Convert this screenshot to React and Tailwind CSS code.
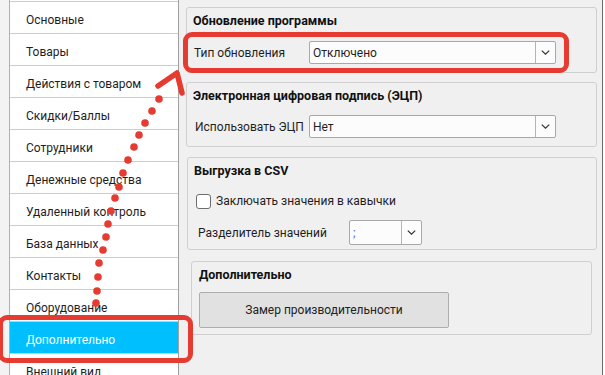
import React from "react";

const menuItems = [
  "Основные",
  "Товары",
  "Действия с товаром",
  "Скидки/Баллы",
  "Сотрудники",
  "Денежные средства",
  "Удаленный контроль",
  "База данных",
  "Контакты",
  "Оборудование",
  "Дополнительно",
  "Внешний вид",
];

const dots = [
  [96, 303], [97, 291], [98, 277], [99, 263], [103, 250], [106, 237],
  [108, 224], [111, 211], [115, 198], [119, 187], [123, 173], [128, 160],
  [134, 147], [139, 135], [145, 123], [152, 111], [159, 99],
];

const Chevron = () => (
  <svg width="9" height="5" viewBox="0 0 9 5" fill="none">
    <path d="M0.8 0.6l3.7 3.6 3.7-3.6" stroke="#333" strokeWidth="1.2" />
  </svg>
);

const Combo = ({ value, width, height, valueClass }) => (
  <div
    className="flex bg-[#fcfcfc] border border-[#a8a8a8] rounded-[2px]"
    style={{ width, height }}
  >
    <div className={`flex-1 flex items-center pl-[3px] ${valueClass || ""}`}>{value}</div>
    <div className="w-[20px] border-l border-[#b4b4b4] flex items-center justify-center">
      <Chevron />
    </div>
  </div>
);

const GroupBox = ({ title, className, children }) => (
  <div className={`border border-[#cfcfcf] rounded-[3px] ${className}`}>
    <div className="font-bold text-[12.5px] text-[#111] h-[26px] flex items-center">{title}</div>
    {children}
  </div>
);

export default function App() {
  return (
    <div
      className="relative w-[605px] h-[375px] overflow-hidden flex bg-[#f0f0f0] text-[12px] text-[#1e1e1e] whitespace-nowrap"
      style={{ fontFamily: "Roboto, 'Noto Sans', sans-serif" }}
    >
      <div className="w-[10px] border-r border-[#b0b0b0] bg-[#f3f3f3]" />
      <div className="w-[169px] bg-white border-r border-[#a0a0a0] pt-[1px] flex flex-col shrink-0">
        {menuItems.map((item) => (
          <div
            key={item}
            className={`h-[32px] shrink-0 border-t border-[#cdcdcd] flex items-center pl-[16px] pt-[4px] ${
              item === "Дополнительно" ? "bg-[#00bfff] text-white" : ""
            }`}
          >
            {item}
          </div>
        ))}
      </div>

      <div className="flex-1 border-r border-[#6a6a6a] pt-[7px] pl-[7px] pr-[5px] flex flex-col">
        <GroupBox title="Обновление программы" className="h-[66px] pl-[6px]">
          <div className="flex items-center mt-[7px]">
            <div className="w-[116px] pl-[1px]">Тип обновления</div>
            <Combo value="Отключено" width={247} height={23} />
          </div>
        </GroupBox>

        <GroupBox title="Электронная цифровая подпись (ЭЦП)" className="h-[65px] mt-[9px] pl-[6px]">
          <div className="flex items-center mt-[6px]">
            <div className="w-[116px] pl-[2px]">Использовать ЭЦП</div>
            <Combo value="Нет" width={247} height={23} />
          </div>
        </GroupBox>

        <GroupBox title="Выгрузка в CSV" className="h-[93px] mt-[10px] ml-[1px] pl-[6px]">
          <div className="flex items-center mt-[8px] pl-[2px] gap-[5px]">
            <div className="w-[15px] h-[15px] bg-white border border-[#6e6e6e] rounded-[3px]" />
            <div>Заключать значения в кавычки</div>
          </div>
          <div className="flex items-center mt-[10px] pl-[4px]">
            <div className="w-[151px]">Разделитель значений</div>
            <Combo value=";" width={73} height={25} valueClass="text-[#3a6fd8]" />
          </div>
        </GroupBox>

        <GroupBox title="Дополнительно" className="h-[74px] mt-[11px] ml-[5px] mr-[5px] pl-[7px]">
          <div className="mt-[4px] w-[250px] h-[36px] bg-[#e1e1e1] border border-[#adadad] rounded-[2px] flex items-center justify-center text-[#222]">
            Замер производительности
          </div>
        </GroupBox>
      </div>
      <div className="w-[2px] bg-white" />

      <div className="absolute left-[183px] top-[32px] w-[386px] h-[41px] border-[5px] border-[#e53b30] rounded-[9px] pointer-events-none" />
      <div className="absolute left-[-2px] top-[315px] w-[195px] h-[48px] border-[5px] border-[#e53b30] rounded-[9px] pointer-events-none" />

      <svg className="absolute left-0 top-0 pointer-events-none" width="605" height="375">
        {dots.map(([x, y], i) => (
          <circle key={i} cx={x} cy={y} r="3.8" fill="#e53b30" />
        ))}
        <path
          d="M158 86 L177 73 L182 93"
          fill="none"
          stroke="#e53b30"
          strokeWidth="5.5"
          strokeLinecap="round"
          strokeLinejoin="round"
        />
      </svg>
    </div>
  );
}
